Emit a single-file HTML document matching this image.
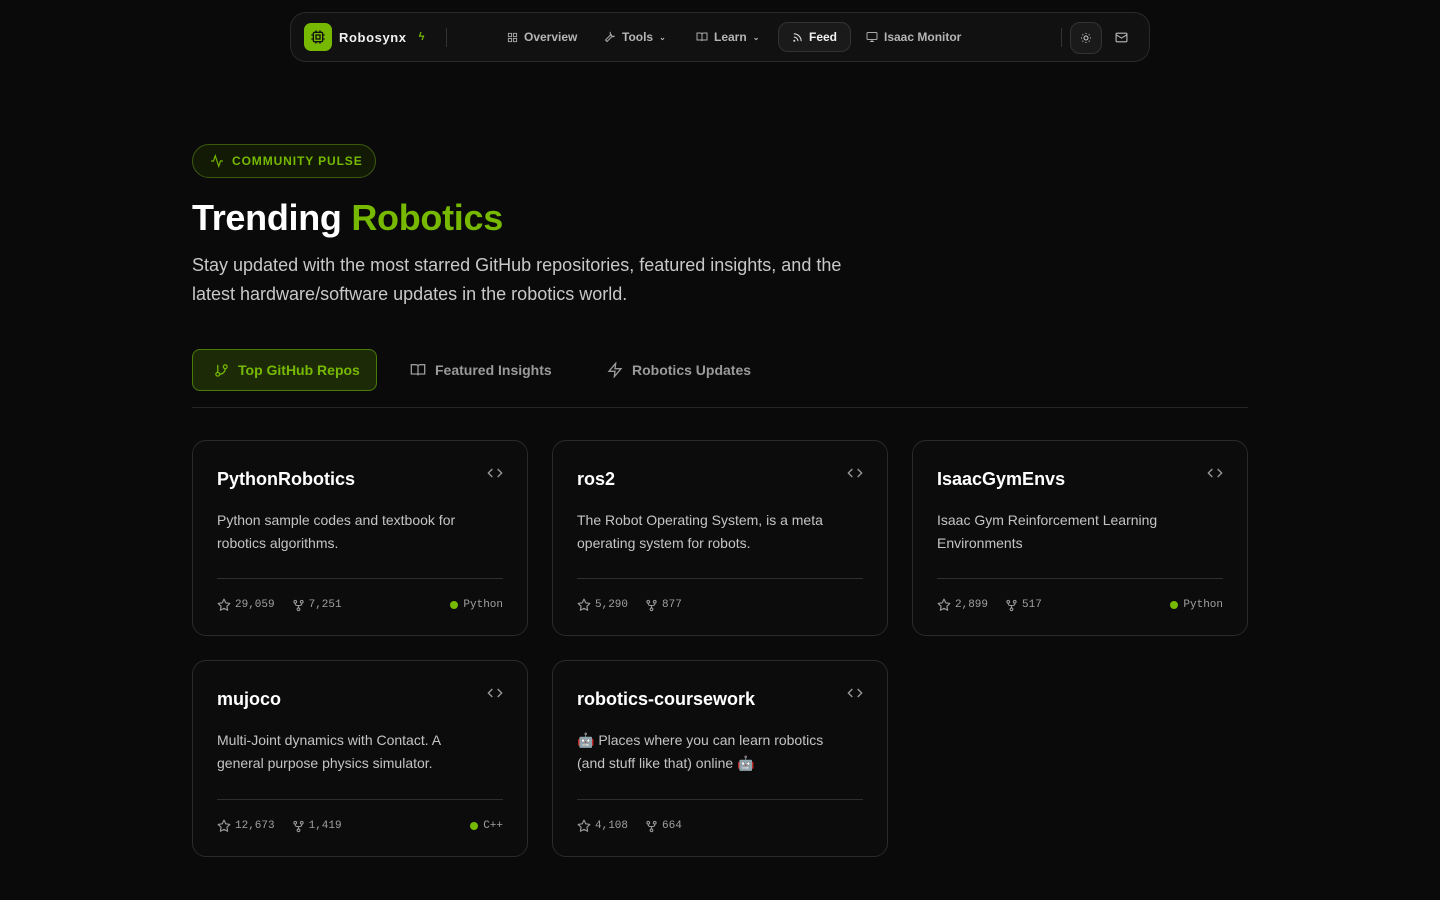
<!DOCTYPE html>
<html><head><meta charset="utf-8"><style>
*{box-sizing:border-box;margin:0;padding:0}
body{width:1440px;height:900px;background:#0a0a0a;font-family:"Liberation Sans",sans-serif;color:#e5e5e5;position:relative;overflow:hidden}
.nav{position:absolute;left:290px;top:12px;width:860px;height:50px;border:1px solid #2a2a2a;border-radius:16px;background:#111;}
.nav .it{position:absolute;top:0;height:48px;display:flex;align-items:center;gap:6px;font-size:12px;font-weight:bold;color:#b5b5b5}
.logo{position:absolute;left:13px;top:10px;width:28px;height:28px;border-radius:7px;background:#76b900;display:flex;align-items:center;justify-content:center}
svg{display:block}
.badge{position:absolute;left:192px;top:144px;width:184px;height:34px;border:1px solid #3d5a10;border-radius:17px;background:#121a06;display:flex;align-items:center;padding-left:17px;gap:8px;color:#76b900;font-size:12px;font-weight:bold;letter-spacing:0.9px}
h1{position:absolute;left:192px;top:197px;font-size:36px;font-weight:bold;color:#fff;letter-spacing:-0.3px}
h1 span{color:#76b900}
.sub{position:absolute;left:192px;top:251px;width:680px;font-size:18px;line-height:29px;color:#c8c8c8}
.tab{position:absolute;top:349px;height:42px;display:flex;align-items:center;gap:9px;font-size:14px;font-weight:bold;color:#9a9a9a}
.tab.on{left:192px;width:185px;border:1px solid #4a7a0a;border-radius:8px;background:#1d2a07;color:#76b900;padding-left:21px}
.hr{position:absolute;left:192px;top:407px;width:1056px;height:1px;background:#262626}
.card{position:absolute;width:336px;border:1px solid #2a2a2a;border-radius:14px;background:#0c0c0c}
.card h3{position:absolute;left:24px;top:28px;font-size:18px;color:#fff}
.card .code{position:absolute;right:24px;top:26px}
.card p{position:absolute;left:24px;top:68px;width:272px;font-size:14px;line-height:22.5px;color:#c4c4c4}
.card .ln{position:absolute;left:24px;right:24px;top:137px;height:1px;background:#2e2e2e}
.card .st{position:absolute;left:24px;right:24px;top:157px;display:flex;align-items:center;font-family:"Liberation Mono",monospace;font-size:11px;color:#a0a0a0}
.st .g{display:flex;align-items:center;gap:4px;margin-right:17px}
.st .lang{margin-left:auto;display:flex;align-items:center;gap:5px}
.dot{width:8px;height:8px;border-radius:50%;background:#76b900}
</style></head><body>
<svg width="0" height="0" style="position:absolute"><defs>
<symbol id="star" viewBox="0 0 24 24"><path d="M12 2l3.1 6.3 6.9 1-5 4.9 1.2 6.8L12 17.8 5.8 21l1.2-6.8-5-4.9 6.9-1z" fill="none" stroke="#999" stroke-width="2" stroke-linejoin="round"/></symbol>
<symbol id="fork" viewBox="0 0 24 24"><g fill="none" stroke="#999" stroke-width="2"><circle cx="6" cy="5" r="2.5"/><circle cx="18" cy="5" r="2.5"/><circle cx="12" cy="19" r="2.5"/><path d="M6 7.5v1.5a3 3 0 0 0 3 3h6a3 3 0 0 0 3-3V7.5M12 12v4.5"/></g></symbol>
</defs></svg>
<div class="nav">
 <div class="logo"><svg width="16" height="16" viewBox="0 0 24 24" fill="none" stroke="#111" stroke-width="2"><rect x="5" y="5" width="14" height="14" rx="2"/><rect x="9" y="9" width="6" height="6"/><path d="M9 2v3M15 2v3M9 19v3M15 19v3M2 9h3M2 15h3M19 9h3M19 15h3"/></svg></div>
 <div class="it" style="left:48px;color:#f0f0f0;font-size:13px;letter-spacing:.6px">Robosynx <span style="color:#76b900;margin-left:6px;font-size:11px">ϟ</span></div>
 <div style="position:absolute;left:155px;top:15px;width:1px;height:19px;background:#333"></div>
 <div class="it" style="left:216px"><svg width="11" height="11" viewBox="0 0 24 24" fill="none" stroke="#aaa" stroke-width="2"><rect x="3" y="3" width="7" height="7"/><rect x="14" y="3" width="7" height="7"/><rect x="3" y="14" width="7" height="7"/><rect x="14" y="14" width="7" height="7"/></svg>Overview</div>
 <div class="it" style="left:313px"><svg width="12" height="12" viewBox="0 0 24 24" fill="none" stroke="#aaa" stroke-width="2"><path d="M14.7 6.3a4 4 0 0 0 5 5L21 10a6 6 0 0 1-8-8l-1.3 1.3M14 7L3 18l3 3 11-11"/></svg>Tools <span style="font-size:8px">⌄</span></div>
 <div class="it" style="left:405px"><svg width="12" height="12" viewBox="0 0 24 24" fill="none" stroke="#aaa" stroke-width="2"><path d="M2 4h7a3 3 0 0 1 3 3v13a2 2 0 0 0-2-2H2zM22 4h-7a3 3 0 0 0-3 3v13a2 2 0 0 1 2-2h8z"/></svg>Learn <span style="font-size:8px">⌄</span></div>
 <div class="it" style="left:487px;top:9px;height:30px;width:73px;border:1px solid #333;border-radius:10px;background:#1a1a1a;padding-left:13px;color:#f0f0f0"><svg width="11" height="11" viewBox="0 0 24 24" fill="none" stroke="#ddd" stroke-width="2.4"><path d="M4 11a9 9 0 0 1 9 9M4 4a16 16 0 0 1 16 16"/><circle cx="5" cy="19" r="1"/></svg>Feed</div>
 <div class="it" style="left:575px"><svg width="12" height="12" viewBox="0 0 24 24" fill="none" stroke="#aaa" stroke-width="2"><rect x="2" y="3" width="20" height="14" rx="2"/><path d="M8 21h8M12 17v4"/></svg>Isaac Monitor</div>
 <div style="position:absolute;left:770px;top:15px;width:1px;height:19px;background:#333"></div>
 <div style="position:absolute;left:779px;top:9px;width:32px;height:32px;border:1px solid #333;border-radius:10px;background:#1a1a1a;display:flex;align-items:center;justify-content:center"><svg width="12" height="12" viewBox="0 0 24 24" fill="none" stroke="#ccc" stroke-width="2"><circle cx="12" cy="12" r="4"/><path d="M12 2v2M12 20v2M2 12h2M20 12h2M5 5l1.5 1.5M17.5 17.5L19 19M5 19l1.5-1.5M17.5 6.5L19 5"/></svg></div>
 <div style="position:absolute;left:824px;top:18px"><svg width="13" height="13" viewBox="0 0 24 24" fill="none" stroke="#bbb" stroke-width="2"><rect x="2" y="4" width="20" height="16" rx="2"/><path d="M2 7l10 6 10-6"/></svg></div>
</div>

<div class="badge"><svg width="14" height="14" viewBox="0 0 24 24" fill="none" stroke="#76b900" stroke-width="2"><path d="M22 12h-4l-3 9L9 3l-3 9H2"/></svg>COMMUNITY PULSE</div>
<h1>Trending <span>Robotics</span></h1>
<div class="sub">Stay updated with the most starred GitHub repositories, featured insights, and the latest hardware/software updates in the robotics world.</div>

<div class="tab on"><svg width="15" height="15" viewBox="0 0 24 24" fill="none" stroke="#76b900" stroke-width="2"><circle cx="6" cy="18" r="3"/><circle cx="18" cy="6" r="3"/><path d="M6 3v12M18 9a9 9 0 0 1-9 9"/></svg>Top GitHub Repos</div>
<div class="tab" style="left:410px"><svg width="16" height="16" viewBox="0 0 24 24" fill="none" stroke="#999" stroke-width="2"><path d="M2 4h7a3 3 0 0 1 3 3v13a2 2 0 0 0-2-2H2zM22 4h-7a3 3 0 0 0-3 3v13a2 2 0 0 1 2-2h8z"/></svg>Featured Insights</div>
<div class="tab" style="left:607px"><svg width="16" height="16" viewBox="0 0 24 24" fill="none" stroke="#999" stroke-width="2"><path d="M13 2L3 14h9l-1 8 10-12h-9z"/></svg>Robotics Updates</div>
<div class="hr"></div>

<div class="card" style="left:192px;top:440px;height:196px"><h3>PythonRobotics</h3><div class="code"><svg width="16" height="12" viewBox="0 0 24 18" fill="none" stroke="#999" stroke-width="2"><path d="M8 3L2 9l6 6M16 3l6 6-6 6"/></svg></div><p>Python sample codes and textbook for robotics algorithms.</p><div class="ln"></div><div class="st"><span class="g"><svg width="14" height="14"><use href="#star"/></svg>29,059</span><span class="g"><svg width="13" height="13"><use href="#fork"/></svg>7,251</span><span class="lang"><span class="dot"></span>Python</span></div></div>
<div class="card" style="left:552px;top:440px;height:196px"><h3>ros2</h3><div class="code"><svg width="16" height="12" viewBox="0 0 24 18" fill="none" stroke="#999" stroke-width="2"><path d="M8 3L2 9l6 6M16 3l6 6-6 6"/></svg></div><p>The Robot Operating System, is a meta operating system for robots.</p><div class="ln"></div><div class="st"><span class="g"><svg width="14" height="14"><use href="#star"/></svg>5,290</span><span class="g"><svg width="13" height="13"><use href="#fork"/></svg>877</span></div></div>
<div class="card" style="left:912px;top:440px;height:196px"><h3>IsaacGymEnvs</h3><div class="code"><svg width="16" height="12" viewBox="0 0 24 18" fill="none" stroke="#999" stroke-width="2"><path d="M8 3L2 9l6 6M16 3l6 6-6 6"/></svg></div><p>Isaac Gym Reinforcement Learning Environments</p><div class="ln"></div><div class="st"><span class="g"><svg width="14" height="14"><use href="#star"/></svg>2,899</span><span class="g"><svg width="13" height="13"><use href="#fork"/></svg>517</span><span class="lang"><span class="dot"></span>Python</span></div></div>
<div class="card" style="left:192px;top:660px;height:197px"><h3>mujoco</h3><div class="code"><svg width="16" height="12" viewBox="0 0 24 18" fill="none" stroke="#999" stroke-width="2"><path d="M8 3L2 9l6 6M16 3l6 6-6 6"/></svg></div><p>Multi-Joint dynamics with Contact. A general purpose physics simulator.</p><div class="ln" style="top:138px"></div><div class="st" style="top:158px"><span class="g"><svg width="14" height="14"><use href="#star"/></svg>12,673</span><span class="g"><svg width="13" height="13"><use href="#fork"/></svg>1,419</span><span class="lang"><span class="dot"></span>C++</span></div></div>
<div class="card" style="left:552px;top:660px;height:197px"><h3>robotics-coursework</h3><div class="code"><svg width="16" height="12" viewBox="0 0 24 18" fill="none" stroke="#999" stroke-width="2"><path d="M8 3L2 9l6 6M16 3l6 6-6 6"/></svg></div><p>🤖 Places where you can learn robotics (and stuff like that) online 🤖</p><div class="ln" style="top:138px"></div><div class="st" style="top:158px"><span class="g"><svg width="14" height="14"><use href="#star"/></svg>4,108</span><span class="g"><svg width="13" height="13"><use href="#fork"/></svg>664</span></div></div>
</body></html>
